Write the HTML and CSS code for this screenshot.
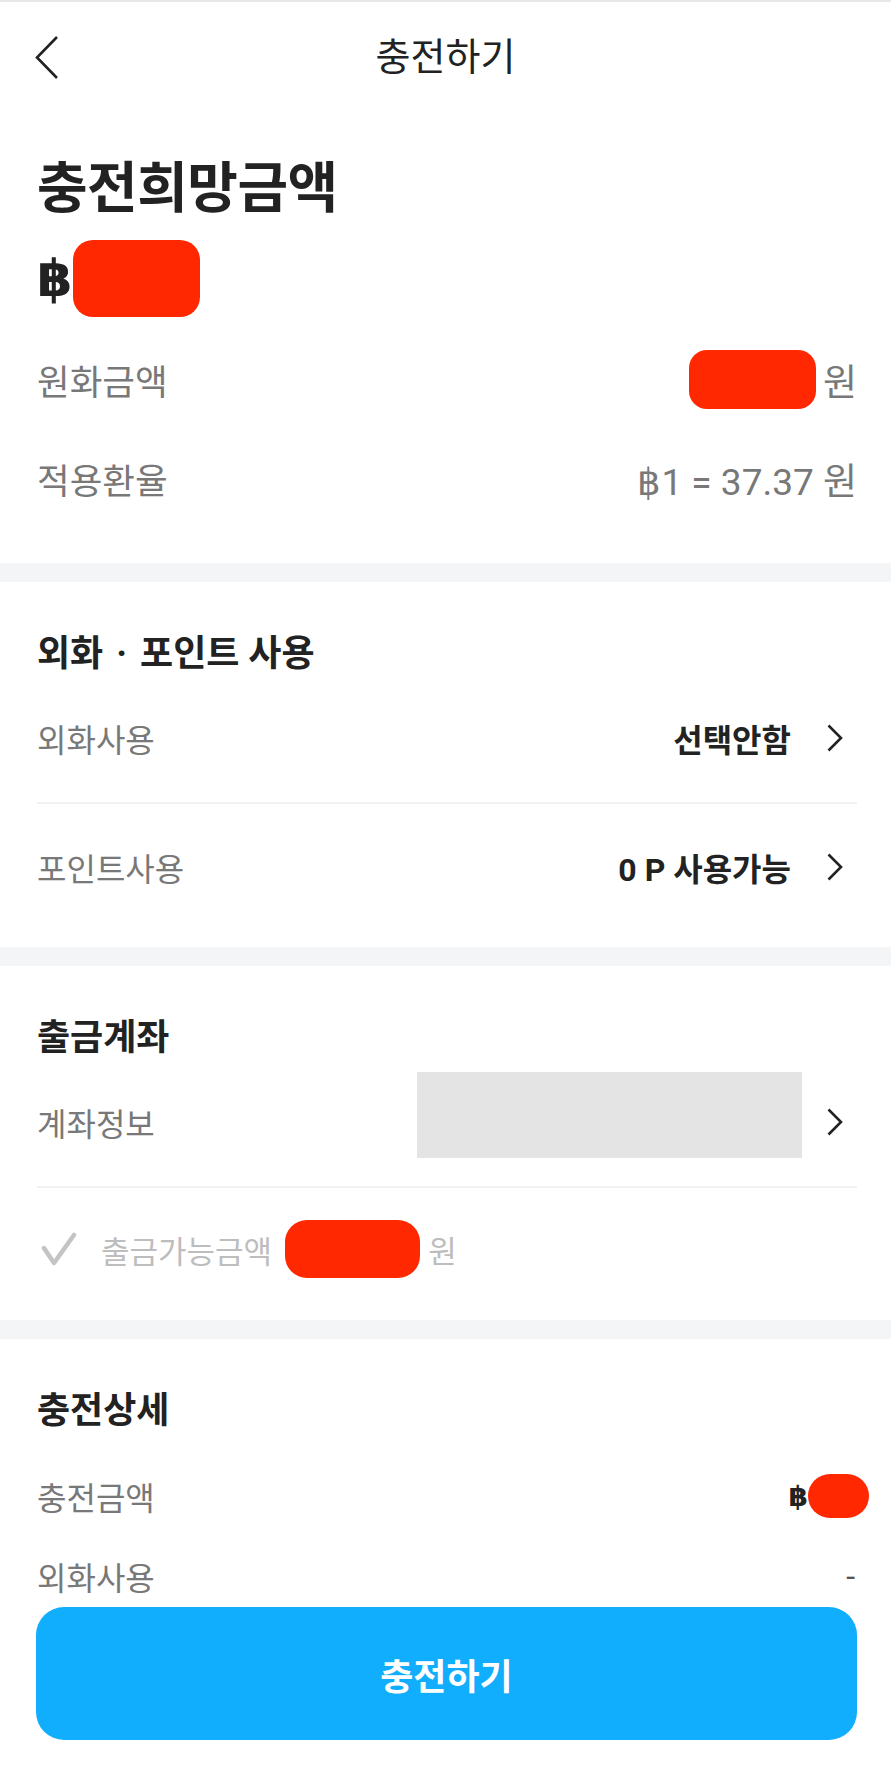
FILE: index.html
```html
<!DOCTYPE html>
<html lang="ko">
<head>
  <meta charset="utf-8">
  <title>충전하기</title>
  <link rel="stylesheet" href="styles.css">
</head>
<body>
  <div class="status-line"></div>
  <header class="topbar">
    <a class="back-btn" href="#">
      <svg width="24" height="44" viewBox="0 0 24 44"><path d="M22 2 L2 22.5 L22 43" /></svg>
    </a>
    <h1 class="topbar-title">충전하기</h1>
  </header>

  <!-- 충전희망금액 -->
  <section class="panel summary">
    <h2 class="hope-title">충전희망금액</h2>
    <div class="hope-amount">
      <span class="baht">฿</span><span class="mask mask-lg"></span>
    </div>
    <div class="info-row">
      <span class="label">원화금액</span>
      <span class="value"><span class="mask mask-md"></span>원</span>
    </div>
    <div class="info-row">
      <span class="label">적용환율</span>
      <span class="value">฿1 = 37.37 원</span>
    </div>
  </section>

  <!-- 외화 / 포인트 -->
  <section class="panel">
    <h2 class="section-title">외화 <span class="dot">·</span> 포인트 사용</h2>
    <div class="link-row">
      <span class="label">외화사용</span>
      <span class="link-value">선택안함
        <svg class="chevron" width="16" height="28" viewBox="0 0 16 28"><path d="M1.5 1.5 L14 14 L1.5 26.5" /></svg>
      </span>
    </div>
    <div class="link-row">
      <span class="label">포인트사용</span>
      <span class="link-value">0 P 사용가능
        <svg class="chevron" width="16" height="28" viewBox="0 0 16 28"><path d="M1.5 1.5 L14 14 L1.5 26.5" /></svg>
      </span>
    </div>
  </section>

  <!-- 출금계좌 -->
  <section class="panel account">
    <h2 class="section-title">출금계좌</h2>
    <div class="link-row account-row">
      <span class="label">계좌정보</span>
      <span class="link-value">
        <span class="account-box"></span>
        <svg class="chevron" width="16" height="28" viewBox="0 0 16 28"><path d="M1.5 1.5 L14 14 L1.5 26.5" /></svg>
      </span>
    </div>
    <div class="check-row">
      <svg class="check" width="36" height="36" viewBox="0 0 36 36"><path d="M3 17 L13 32 L33 4" /></svg>
      <span class="check-text">출금가능금액</span>
      <span class="mask mask-sm"></span>
      <span class="check-text">원</span>
    </div>
  </section>

  <!-- 충전상세 -->
  <section class="panel detail">
    <h2 class="section-title">충전상세</h2>
    <div class="detail-row">
      <span class="label">충전금액</span>
      <span class="detail-value"><span class="baht-sm">฿</span><span class="mask mask-pill"></span></span>
    </div>
    <div class="detail-row">
      <span class="label">외화사용</span>
      <span class="dash">-</span>
    </div>
  </section>

  <button class="charge-btn">충전하기</button>
</body>
</html>
```

FILE: styles.css
```css
/* Base */
html, body {
  background: #fff;
}
body {
  margin: 0;
  font-family: Roboto, "Noto Sans CJK KR", "Noto Sans", sans-serif;
  color: #222;
  min-height: 1766px;
}
.status-line {
  height: 2px;
  background: #e8e8e8;
}

/* Top bar */
.topbar {
  height: 110px;
  display: grid;
  grid-template-columns: 1fr auto 1fr;
  align-items: center;
}
.back-btn {
  padding-left: 35px;
  display: flex;
  align-items: center;
}
.back-btn path,
.chevron path {
  fill: none;
  stroke: #222;
  stroke-width: 2.6;
}
.topbar-title {
  margin: 0;
  font-size: 38px;
  font-weight: 400;
  line-height: 44px;
}

/* Panels */
.panel {
  padding: 0 34px 0 37px;
  border-top: 19px solid #f4f5f7;
}
.summary {
  border-top: none;
  padding-top: 46px;
  padding-bottom: 35px;
}
.hope-title {
  margin: 0;
  font-size: 55px;
  font-weight: 700;
  line-height: 60px;
  letter-spacing: -0.5px;
}
.hope-amount {
  display: flex;
  align-items: center;
  margin-top: 22px;
  margin-bottom: 13px;
}
.baht {
  font-family: "DejaVu Sans", sans-serif;
  font-weight: 700;
  font-size: 51px;
  line-height: 1;
}
.mask {
  display: inline-block;
  background: #ff2800;
}
.mask-lg {
  width: 127px;
  height: 77px;
  border-radius: 20px;
}
.mask-md {
  width: 127px;
  height: 59px;
  border-radius: 18px;
  margin-right: 7px;
}
.mask-sm {
  width: 135px;
  height: 58px;
  border-radius: 22px;
  margin: 0 8px 0 13px;
}
.mask-pill {
  width: 61px;
  height: 44px;
  border-radius: 22px;
}

.info-row {
  height: 99px;
  display: flex;
  align-items: center;
  justify-content: space-between;
}
.label {
  font-size: 32px;
  color: #787878;
}
.info-row .label {
  font-size: 35.5px;
}
.value {
  display: flex;
  align-items: center;
  font-size: 37px;
  color: #787878;
}

/* Section with links */
.section-title {
  margin: 0;
  padding-top: 52px;
  font-size: 36px;
  font-weight: 700;
  line-height: 40px;
}
.dot {
  margin: 0 4px;
}
.link-row {
  height: 128px;
  display: flex;
  align-items: center;
  justify-content: space-between;
}
.link-row + .link-row {
  border-top: 2px solid #f1f1f1;
  height: 126px;
}
.panel:nth-of-type(2) {
  padding-bottom: 17px;
  border-top-width: 19px;
}
.link-value {
  display: flex;
  align-items: center;
  font-size: 32px;
  font-weight: 700;
  color: #222;
}
.chevron {
  margin-left: 36px;
  margin-right: 14px;
}

/* Account */
.account-row {
  border-bottom: 2px solid #f1f1f1;
}
.account-box {
  width: 385px;
  height: 86px;
  background: #e4e4e4;
  margin-bottom: 14px;
}
.account-box + .chevron {
  margin-left: 25px;
}
.check-row {
  height: 122px;
  display: flex;
  align-items: center;
  padding-bottom: 10px;
}
.check {
  margin-left: 4px;
  margin-right: 24px;
}
.check path {
  fill: none;
  stroke: #c4c4c4;
  stroke-width: 4.5;
  stroke-linecap: round;
  stroke-linejoin: round;
}
.check-text {
  font-size: 31px;
  color: #bdbdbd;
}

/* Detail */
.detail .section-title {
  margin-bottom: 25px;
}
.detail-row {
  height: 80px;
  display: flex;
  align-items: center;
  justify-content: space-between;
}
.detail-value {
  display: flex;
  align-items: center;
  margin-right: -12px;
}
.baht-sm {
  font-family: "DejaVu Sans", sans-serif;
  font-weight: 700;
  font-size: 28px;
}
.dash {
  font-size: 32px;
  color: #555;
  margin-right: 2px;
}

/* Bottom button */
.charge-btn {
  position: fixed;
  left: 36px;
  right: 34px;
  bottom: 26px;
  height: 133px;
  border: none;
  border-radius: 28px;
  background: #12aefe;
  color: #fff;
  font-family: Roboto, "Noto Sans CJK KR", sans-serif;
  font-size: 36px;
  font-weight: 700;
  display: flex;
  align-items: center;
  justify-content: center;
}
```
